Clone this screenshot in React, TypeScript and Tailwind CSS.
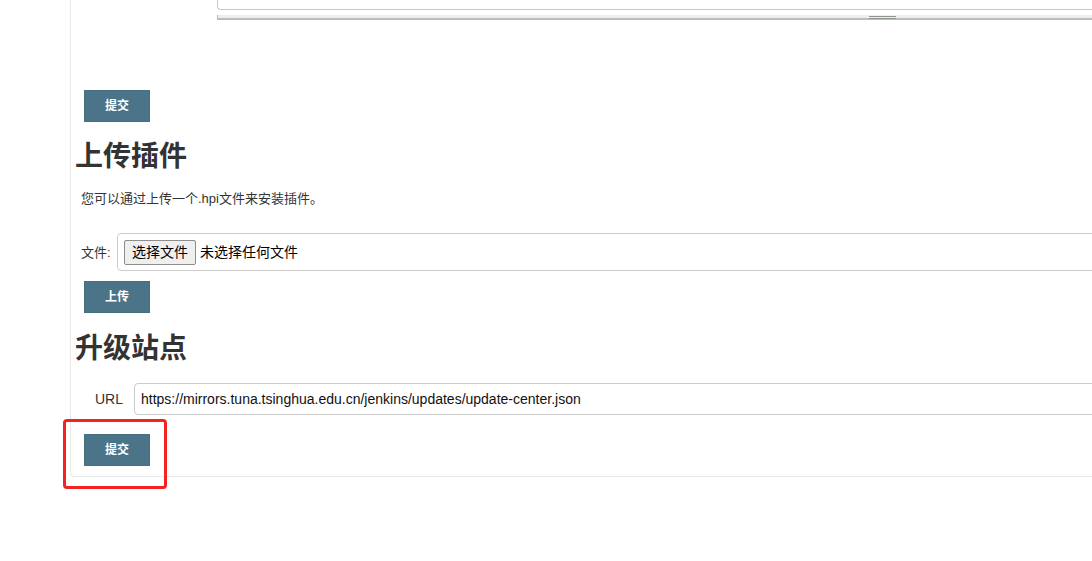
import React from 'react';

const font = { fontFamily: '"Liberation Sans", "Noto Sans CJK SC", sans-serif' };

const SubmitButton: React.FC<{ label: string; className?: string }> = ({ label, className = '' }) => (
  <button
    className={`w-[66px] h-[32px] bg-[#4b7489] border border-[#45707f] text-white text-[12px] font-bold ${className}`}
  >
    {label}
  </button>
);

export default function App() {
  return (
    <div className="relative w-[1092px] h-[561px] overflow-hidden bg-white text-[#333]" style={font}>
      <div className="ml-[70px] w-[1140px] border-l border-b border-[#e9e9e9] rounded-bl-[4px] pb-[10px]">
        {/* textarea tail + resize bar */}
        <div className="ml-[146px]">
          <div className="h-[10px] border-l border-b border-[#c8c8c8] rounded-bl-[4px]" />
          <div className="relative mt-[5px] h-[5px] bg-[#eeeeee] border-l border-b-2 border-[#bcbcbc]">
            <div className="absolute left-[651px] top-[1px] w-[27px] h-[3px] border-y border-[#8f948f]" />
          </div>
        </div>

        <SubmitButton label="提交" className="mt-[70px] ml-[13px]" />

        <h2 className="mt-[18px] ml-[4px] text-[28px] leading-[34px] font-bold text-[#333]">上传插件</h2>
        <p className="mt-[15px] ml-[10px] text-[13px] leading-[20px]">您可以通过上传一个.hpi文件来安装插件。</p>

        <div className="mt-[24px] ml-[10px] flex items-center">
          <span className="text-[13px] w-[36px] pt-[2px]">文件:</span>
          <div className="flex-1 h-[38px] border border-[#cccccc] rounded-[4px] flex items-center pl-[6px]">
            <button className="h-[25px] px-[7px] bg-[#efefef] border border-[#8d8d8d] rounded-[2px] text-[14px] text-black">
              选择文件
            </button>
            <span className="ml-[4px] text-[14px] text-black">未选择任何文件</span>
          </div>
        </div>

        <SubmitButton label="上传" className="mt-[10px] ml-[13px]" />

        <h2 className="mt-[19px] ml-[4px] text-[28px] leading-[34px] font-bold text-[#333]">升级站点</h2>

        <div className="mt-[17px] flex items-center">
          <span className="ml-[24px] w-[39px] text-[14px]">URL</span>
          <div className="flex-1 h-[32px] border border-[#cccccc] rounded-[4px] flex items-center pl-[6px] text-[14px] text-[#111]">
            https://mirrors.tuna.tsinghua.edu.cn/jenkins/updates/update-center.json
          </div>
        </div>

        <SubmitButton label="提交" className="mt-[19px] ml-[13px]" />
      </div>

      <div className="absolute left-[63px] top-[419px] w-[104px] h-[70px] border-[3px] border-[#f52222] rounded-[4px]" />
    </div>
  );
}
